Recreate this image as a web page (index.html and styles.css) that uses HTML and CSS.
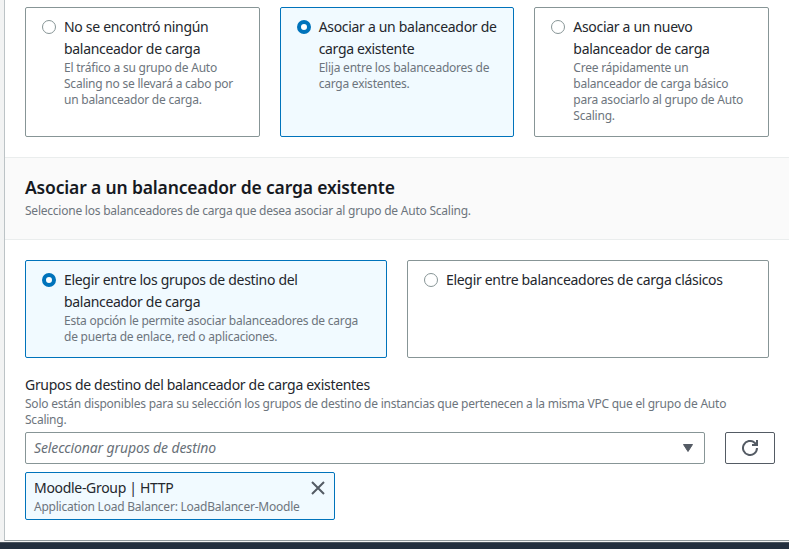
FILE: index.html
```html
<!DOCTYPE html>
<html lang="es">
<head>
<meta charset="utf-8">
<title>Asociar a un balanceador de carga existente</title>
<link rel="stylesheet" href="styles.css">
</head>
<body>
<main class="panel">
  <div class="tiles tiles-three">
    <label class="tile">
      <span class="radio"></span>
      <span class="tile-text">
        <span class="label">No se encontró ningún<br>balanceador de carga</span>
        <span class="hint">El tráfico a su grupo de Auto<br>Scaling no se llevará a cabo por<br>un balanceador de carga.</span>
      </span>
    </label>
    <label class="tile selected">
      <span class="radio"></span>
      <span class="tile-text">
        <span class="label">Asociar a un balanceador de<br>carga existente</span>
        <span class="hint">Elija entre los balanceadores de<br>carga existentes.</span>
      </span>
    </label>
    <label class="tile">
      <span class="radio"></span>
      <span class="tile-text">
        <span class="label">Asociar a un nuevo<br>balanceador de carga</span>
        <span class="hint">Cree rápidamente un<br>balanceador de carga básico<br>para asociarlo al grupo de Auto<br>Scaling.</span>
      </span>
    </label>
  </div>
  <header class="section-header">
    <h2>Asociar a un balanceador de carga existente</h2>
    <p class="hint">Seleccione los balanceadores de carga que desea asociar al grupo de Auto Scaling.</p>
  </header>
  <div class="tiles tiles-two">
    <label class="tile selected">
      <span class="radio"></span>
      <span class="tile-text">
        <span class="label">Elegir entre los grupos de destino del<br>balanceador de carga</span>
        <span class="hint">Esta opción le permite asociar balanceadores de carga<br>de puerta de enlace, red o aplicaciones.</span>
      </span>
    </label>
    <label class="tile">
      <span class="radio"></span>
      <span class="tile-text">
        <span class="label">Elegir entre balanceadores de carga clásicos</span>
      </span>
    </label>
  </div>
  <section class="field">
    <div class="label">Grupos de destino del balanceador de carga existentes</div>
    <p class="hint">Solo están disponibles para su selección los grupos de destino de instancias que pertenecen a la misma VPC que el grupo de Auto<br>Scaling.</p>
    <div class="controls">
      <div class="select">
        <span class="placeholder">Seleccionar grupos de destino</span>
        <svg class="caret" width="10" height="8" viewBox="0 0 10 8"><path d="M.5.5h9L5 7.5z"/></svg>
      </div>
      <button class="refresh" type="button" aria-label="Actualizar">
        <svg width="16" height="16" viewBox="0 0 16 16"><path d="M15 8A7 7 0 1 1 12.6 2.7L14 4M15 0v5h-5"/></svg>
      </button>
    </div>
    <div class="token">
      <div>
        <div class="label">Moodle-Group | HTTP</div>
        <div class="hint">Application Load Balancer: LoadBalancer-Moodle</div>
      </div>
      <svg class="close" width="14" height="14" viewBox="0 0 14 14"><path d="M1 1l12 12M13 1L1 13"/></svg>
    </div>
  </section>
</main>
<footer class="footer"></footer>
</body>
</html>
```
FILE: styles.css
```css
* { box-sizing: border-box; }
body {
  margin: 0;
  height: 549px;
  overflow: hidden;
  display: flex;
  flex-direction: column;
  background: #f2f3f3;
  color: #16191f;
  font-family: "Noto Sans", "Open Sans", sans-serif;
  white-space: nowrap;
}
.panel {
  flex: none;
  height: 541px;
  margin-left: 4px;
  background: #fff;
  border-left: 1px solid #bcc3c6;
  border-bottom: 1px solid #8f989b;
}
.tiles { display: grid; gap: 20px; padding: 0 20px; }
.tiles-three { grid-template-columns: repeat(3, 1fr); grid-auto-rows: 130px; padding-top: 7px; padding-bottom: 20px; }
.tiles-two { grid-template-columns: repeat(2, 1fr); grid-auto-rows: 98px; padding-top: 20px; }
.tile {
  display: flex;
  gap: 8px;
  padding: 8px 16px;
  border: 1px solid #879596;
  border-radius: 2px;
}
.tile.selected { background: #f1faff; border-color: #0073bb; }
.radio {
  flex: none;
  width: 14px;
  height: 14px;
  margin-top: 4px;
  border: 1px solid #879596;
  border-radius: 50%;
  background: #fff;
}
.selected .radio { border: 4px solid #0073bb; }
.label { display: block; font-size: 14px; line-height: 22px; letter-spacing: -0.31px; color: #24272d; }
.hint { display: block; margin: 0; font-size: 12px; line-height: 16px; letter-spacing: -0.23px; color: #6d757d; }
.section-header {
  height: 83px;
  padding: 18px 20px 0;
  background: #fafafa;
  border-top: 1px solid #eaeded;
  border-bottom: 1px solid #eaeded;
}
h2 { margin: 0 0 5px; font-size: 17.5px; line-height: 22px; font-weight: 600; letter-spacing: -0.16px; }
.field { padding: 16px 14px 0 20px; }
.controls { display: flex; gap: 20px; margin-top: 4px; }
.select {
  flex: 1;
  height: 32px;
  display: flex;
  align-items: center;
  justify-content: space-between;
  padding: 0 11px 0 8px;
  border: 1px solid #879596;
  border-radius: 2px;
}
.placeholder { font-size: 14px; line-height: 20px; font-style: italic; letter-spacing: -0.13px; color: #687078; }
.caret { fill: #545b64; stroke: #545b64; stroke-linejoin: round; }
.refresh {
  width: 50px;
  height: 32px;
  padding: 0;
  display: grid;
  place-items: center;
  background: #fff;
  border: 1px solid #545b64;
  border-radius: 2px;
}
.refresh svg, .close { fill: none; stroke: #545b64; stroke-width: 2; }
.token {
  width: 310px;
  height: 48px;
  margin-top: 8px;
  padding: 4px 9px 0 8px;
  display: flex;
  justify-content: space-between;
  background: #f1faff;
  border: 1px solid #0073bb;
  border-radius: 2px;
}
.close { margin-top: 4px; }
.footer { height: 7px; margin-top: 1px; background: #232f3e; border-top: 1px solid #4a545e; }
```
